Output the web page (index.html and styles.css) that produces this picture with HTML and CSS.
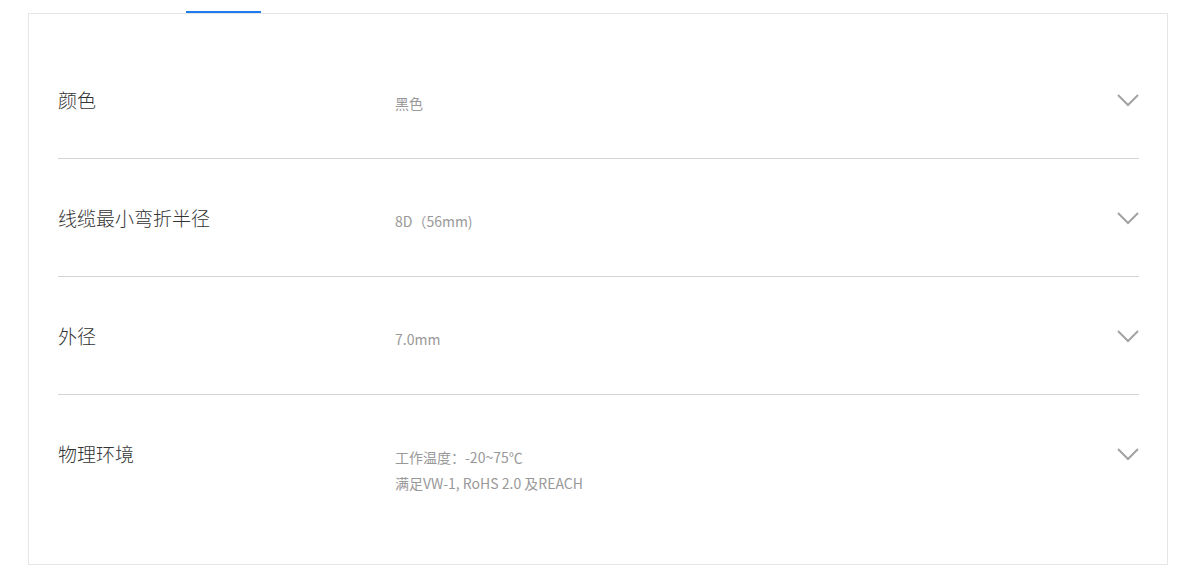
FILE: index.html
```html
<!DOCTYPE html>
<html lang="zh-CN">
<head>
<meta charset="UTF-8" />
<title>产品参数</title>
<meta name="viewport" content="width=device-width, initial-scale=1.0" />
<link rel="stylesheet" href="styles.css">
</head>
<body>

<div class="page">
  <div class="tabs">
    <div class="tab"></div>
    <div class="tab active"></div>
  </div>

  <div class="spec-card">

    <div class="spec-row">
      <div class="spec-name">颜色</div>
      <div class="spec-value">
        <p>黑色</p>
      </div>
      <div class="spec-arrow">
        <svg width="22" height="13" viewBox="0 0 22 13"><polyline points="1,1 11,11 21,1" /></svg>
      </div>
    </div>

    <div class="spec-row">
      <div class="spec-name">线缆最小弯折半径</div>
      <div class="spec-value">
        <p>8D（56mm)</p>
      </div>
      <div class="spec-arrow">
        <svg width="22" height="13" viewBox="0 0 22 13"><polyline points="1,1 11,11 21,1" /></svg>
      </div>
    </div>

    <div class="spec-row">
      <div class="spec-name">外径</div>
      <div class="spec-value">
        <p>7.0mm</p>
      </div>
      <div class="spec-arrow">
        <svg width="22" height="13" viewBox="0 0 22 13"><polyline points="1,1 11,11 21,1" /></svg>
      </div>
    </div>

    <div class="spec-row">
      <div class="spec-name">物理环境</div>
      <div class="spec-value">
        <p>工作温度：-20~75℃</p>
        <p>满足VW-1, RoHS 2.0 及REACH</p>
      </div>
      <div class="spec-arrow">
        <svg width="22" height="13" viewBox="0 0 22 13"><polyline points="1,1 11,11 21,1" /></svg>
      </div>
    </div>

  </div>
</div>

</body>
</html>
```

FILE: styles.css
```css
body {
  margin: 0;
  background: #fff;
  font-family: "Noto Sans CJK SC", "Noto Sans", sans-serif;
}
.page {
  padding: 11px 0 0 28px;
}
/* tabs - only the active underline is visible */
.tabs {
  display: flex;
  height: 2px;
}
.tab {
  width: 158px;
}
.tab.active {
  width: 75px;
  background: #1f7aec;
}
.spec-card {
  width: 1140px;
  box-sizing: border-box;
  border: 1px solid #e6e6e6;
  padding: 27px 28px 26px 29px;
}
.spec-row {
  display: flex;
  align-items: flex-start;
  padding: 46px 0 42px;
  border-bottom: 1px solid #d4d4d4;
}
.spec-row:last-child {
  border-bottom: none;
}
.spec-name {
  width: 337px;
  font-size: 19px;
  font-weight: 300;
  line-height: 26px;
  color: #333;
}
.spec-value {
  flex: 1;
  padding-top: 3px;
  font-size: 14px;
  line-height: 26px;
  color: #999;
}
.spec-value p {
  margin: 0;
}
.spec-arrow {
  height: 26px;
  display: flex;
  align-items: center;
}
.spec-arrow svg polyline {
  fill: none;
  stroke: #a3a3a3;
  stroke-width: 2;
}
```
